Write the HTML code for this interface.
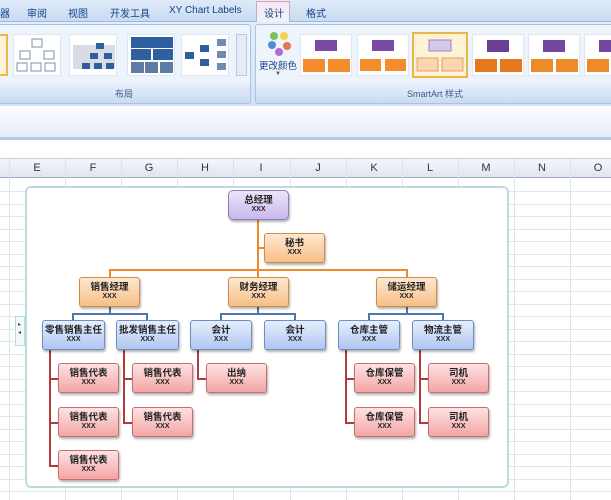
<!DOCTYPE html>
<html><head><meta charset="utf-8"><style>
*{margin:0;padding:0;box-sizing:border-box}
body{width:611px;height:500px;overflow:hidden;background:#fff;font-family:"Liberation Sans","Noto Sans CJK SC",sans-serif;position:relative}
.a{position:absolute}
.tabs{left:0;top:0;width:611px;height:22px;background:linear-gradient(#dfeaf7,#c9dbf1);border-bottom:1px solid #9fb7d8}
.tab{position:absolute;top:5px;font-size:10px;color:#15428b}
.rib{left:0;top:22px;width:611px;height:84px;background:linear-gradient(#e4eefa,#d3e2f5)}
.grp{position:absolute;top:2px;height:80px;border:1px solid #aac3e3;border-radius:3px;background:linear-gradient(#eef4fc 70%,#c8dbf2)}
.gl{position:absolute;bottom:3px;width:100%;text-align:center;font-size:9px;color:#3b5a8a}
.th{position:absolute;top:9px;height:42px;background:#fff;border:1px solid #dde6f2}
.bar{left:0;top:106px;width:611px;height:34px;background:linear-gradient(#fbfdff,#e6eef8);border-bottom:3px solid #b7c9e2}
.hdr{left:0;top:158px;width:611px;height:20px;background:linear-gradient(#f5f7fa,#dfe5ee);border-bottom:1px solid #9eb1c9;border-top:1px solid #c5cfdc}
.hdr span{position:absolute;top:3px;font-size:11px;color:#333;width:56px;text-align:center}
.vl{position:absolute;top:158px;width:1px;height:342px;background:#dde3ea}
.hl{position:absolute;left:0;width:611px;height:1px;background:#e0e5ec}
.b{position:absolute;width:61px;height:30px;border-radius:3px;font-size:9.5px;font-weight:bold;text-align:center;line-height:11px;padding-top:4px;color:#222;box-shadow:1px 2px 2px rgba(0,0,0,.3);white-space:nowrap}
.b i{display:block;font-style:normal;font-size:7px;line-height:8px}
.p{background:linear-gradient(#ece4fa,#c9b8ec);border:1px solid #8f7bbf;border-radius:5px}
.o{background:linear-gradient(#fde8d0,#f7bf88);border:1px solid #d08d4a}
.u{background:linear-gradient(#e6eefc,#afc7f2);border:1px solid #6f8fc4}
.r{background:linear-gradient(#fde2e2,#f3a5a5);border:1px solid #c46e6e}
.ol{position:absolute;background:#f08a2a}
.bl{position:absolute;background:#4d79b0}
.rl{position:absolute;background:#b23a3a}
</style></head><body>
<div class="a tabs">
<span class="tab" style="left:0">器</span><span class="tab" style="left:27px">审阅</span><span class="tab" style="left:68px">视图</span><span class="tab" style="left:110px">开发工具</span><span class="tab" style="left:169px">XY Chart Labels</span>
<div style="position:absolute;left:256px;top:1px;width:34px;height:22px;background:linear-gradient(#f7e7f1,#eef4fc);border:1px solid #c9a9c4;border-bottom:none"></div>
<span class="tab" style="left:264px">设计</span><span class="tab" style="left:306px">格式</span>
</div>
<div class="a rib">
<div class="grp" style="left:-3px;width:254px">
<div class="th" style="left:0;width:10px;border:2px solid #f0b545;background:#fff4d8"></div>
<div class="th" style="left:15px;width:48px"><svg width="48" height="40"><g fill="none" stroke="#7d8fa8"><rect x="18" y="4" width="10" height="8"/><rect x="6" y="16" width="10" height="8"/><rect x="30" y="16" width="10" height="8"/><rect x="3" y="28" width="10" height="8"/><rect x="17" y="28" width="10" height="8"/><rect x="31" y="28" width="10" height="8"/></g></svg></div>
<div class="th" style="left:71px;width:48px"><svg width="48" height="40"><rect x="3" y="10" width="42" height="24" fill="#d8dde5"/><rect x="26" y="8" width="8" height="6" fill="#2e5f9e"/><rect x="20" y="18" width="8" height="6" fill="#2e5f9e"/><rect x="34" y="18" width="8" height="6" fill="#2e5f9e"/><rect x="12" y="28" width="8" height="6" fill="#2e5f9e"/><rect x="24" y="28" width="8" height="6" fill="#2e5f9e"/><rect x="36" y="28" width="8" height="6" fill="#2e5f9e"/></svg></div>
<div class="th" style="left:129px;width:48px"><svg width="48" height="40"><rect x="3" y="2" width="42" height="11" fill="#2e5f9e"/><rect x="3" y="14" width="20" height="11" fill="#2e5f9e"/><rect x="25" y="14" width="20" height="11" fill="#2e5f9e"/><rect x="3" y="27" width="13" height="11" fill="#5d7ca6"/><rect x="17" y="27" width="13" height="11" fill="#5d7ca6"/><rect x="32" y="27" width="13" height="11" fill="#5d7ca6"/></svg></div>
<div class="th" style="left:183px;width:48px"><svg width="48" height="40"><rect x="3" y="17" width="9" height="7" fill="#2e5f9e"/><rect x="18" y="10" width="9" height="7" fill="#2e5f9e"/><rect x="18" y="24" width="9" height="7" fill="#2e5f9e"/><rect x="35" y="4" width="9" height="7" fill="#6e8bb3"/><rect x="35" y="16" width="9" height="7" fill="#6e8bb3"/><rect x="35" y="28" width="9" height="7" fill="#6e8bb3"/></svg></div>
<div style="position:absolute;left:238px;top:9px;width:11px;height:42px;background:#e3ecf8;border:1px solid #b7c9e2"></div>
<div class="gl">布局</div></div>
<div class="grp" style="left:255px;width:360px">
<svg style="position:absolute;left:11px;top:5px" width="26" height="26"><circle cx="7" cy="6" r="4" fill="#7cc35d"/><circle cx="17" cy="6" r="4" fill="#f1d44c"/><circle cx="5" cy="15" r="4" fill="#4f8fd6"/><circle cx="20" cy="16" r="4" fill="#e07a4a"/><circle cx="12" cy="22" r="4" fill="#b36ad0"/></svg>
<div style="position:absolute;left:3px;top:33px;font-size:9.5px;color:#15428b">更改颜色</div>
<div style="position:absolute;left:19px;top:46px;font-size:6px;color:#555">▼</div>
<div class="th" style="left:44px;width:52px"><svg width="52" height="40"><rect x="14" y="5" width="22" height="11" fill="#7b4aa3"/><rect x="2" y="24" width="22" height="13" fill="#f28c2c"/><rect x="27" y="24" width="22" height="13" fill="#f28c2c"/></svg></div>
<div class="th" style="left:101px;width:52px"><svg width="52" height="40"><rect x="14" y="5" width="22" height="11" fill="#7b4aa3"/><rect x="2" y="24" width="21" height="12" fill="#f28c2c"/><rect x="27" y="24" width="21" height="12" fill="#f28c2c"/></svg></div>
<div class="th" style="left:156px;width:56px;top:7px;height:46px;border:2px solid #e8b64b;background:#fff3d6"><svg width="52" height="40"><rect x="15" y="6" width="22" height="11" fill="#d6c9ee" stroke="#9b86c4"/><rect x="3" y="24" width="21" height="13" fill="#fbd5b0" stroke="#e0a06a"/><rect x="28" y="24" width="21" height="13" fill="#fbd5b0" stroke="#e0a06a"/></svg></div>
<div class="th" style="left:216px;width:52px"><svg width="52" height="40"><rect x="14" y="5" width="22" height="12" fill="#6a3e94"/><rect x="2" y="24" width="22" height="13" fill="#e5781c"/><rect x="27" y="24" width="22" height="13" fill="#e5781c"/></svg></div>
<div class="th" style="left:272px;width:52px"><svg width="52" height="40"><rect x="14" y="5" width="22" height="12" fill="#7447a0"/><rect x="2" y="24" width="22" height="13" fill="#ed8a2a"/><rect x="27" y="24" width="22" height="13" fill="#ed8a2a"/></svg></div>
<div class="th" style="left:328px;width:40px"><svg width="40" height="40"><rect x="14" y="5" width="22" height="12" fill="#7447a0"/><rect x="2" y="24" width="22" height="13" fill="#ed8a2a"/></svg></div>
<div class="gl">SmartArt 样式</div></div>
</div>
<div class="a bar"></div>
<div class="a hdr">
<span style="left:9px">E</span><span style="left:65px">F</span><span style="left:121px">G</span><span style="left:177px">H</span><span style="left:233px">I</span><span style="left:290px">J</span><span style="left:346px">K</span><span style="left:402px">L</span><span style="left:458px">M</span><span style="left:514px">N</span><span style="left:570px">O</span>
</div>
<div class="vl" style="left:9px"></div><div class="vl" style="left:65px"></div><div class="vl" style="left:121px"></div><div class="vl" style="left:177px"></div><div class="vl" style="left:233px"></div><div class="vl" style="left:290px"></div><div class="vl" style="left:346px"></div><div class="vl" style="left:402px"></div><div class="vl" style="left:458px"></div><div class="vl" style="left:514px"></div><div class="vl" style="left:570px"></div>
<div class="hl" style="top:191px"></div><div class="hl" style="top:204px"></div><div class="hl" style="top:216px"></div><div class="hl" style="top:229px"></div><div class="hl" style="top:241px"></div><div class="hl" style="top:254px"></div><div class="hl" style="top:266px"></div><div class="hl" style="top:279px"></div><div class="hl" style="top:291px"></div><div class="hl" style="top:304px"></div><div class="hl" style="top:316px"></div><div class="hl" style="top:329px"></div><div class="hl" style="top:341px"></div><div class="hl" style="top:354px"></div><div class="hl" style="top:366px"></div><div class="hl" style="top:379px"></div><div class="hl" style="top:391px"></div><div class="hl" style="top:404px"></div><div class="hl" style="top:416px"></div><div class="hl" style="top:429px"></div><div class="hl" style="top:441px"></div><div class="hl" style="top:454px"></div><div class="hl" style="top:466px"></div><div class="hl" style="top:479px"></div><div class="hl" style="top:491px"></div>
<div class="a" style="left:25px;top:186px;width:484px;height:302px;background:#fff;border:2px solid #b9dcdc;border-radius:6px"></div>
<div class="a" style="left:15px;top:316px;width:10px;height:30px;background:#f3f8fa;border:1px solid #b9dcdc;font-size:6px;color:#446;padding:4px 0 0 2px;line-height:8px">▸<br>◂</div>
<div class="ol" style="left:257px;top:220px;width:2px;height:58px"></div>
<div class="ol" style="left:258px;top:247px;width:7px;height:2px"></div>
<div class="ol" style="left:109px;top:269px;width:298px;height:2px"></div>
<div class="ol" style="left:109px;top:269px;width:2px;height:9px"></div>
<div class="ol" style="left:406px;top:269px;width:2px;height:9px"></div>
<div class="bl" style="left:109px;top:307px;width:2px;height:7px"></div><div class="bl" style="left:72px;top:313px;width:76px;height:2px"></div><div class="bl" style="left:72px;top:313px;width:2px;height:7px"></div><div class="bl" style="left:146px;top:313px;width:2px;height:7px"></div>
<div class="bl" style="left:257px;top:307px;width:2px;height:7px"></div><div class="bl" style="left:220px;top:313px;width:76px;height:2px"></div><div class="bl" style="left:220px;top:313px;width:2px;height:7px"></div><div class="bl" style="left:294px;top:313px;width:2px;height:7px"></div>
<div class="bl" style="left:406px;top:307px;width:2px;height:7px"></div><div class="bl" style="left:368px;top:313px;width:76px;height:2px"></div><div class="bl" style="left:368px;top:313px;width:2px;height:7px"></div><div class="bl" style="left:442px;top:313px;width:2px;height:7px"></div>
<div class="rl" style="left:49px;top:350px;width:2px;height:116px"></div><div class="rl" style="left:49px;top:378px;width:9px;height:2px"></div><div class="rl" style="left:49px;top:422px;width:9px;height:2px"></div><div class="rl" style="left:49px;top:465px;width:9px;height:2px"></div>
<div class="rl" style="left:123px;top:350px;width:2px;height:74px"></div><div class="rl" style="left:123px;top:378px;width:9px;height:2px"></div><div class="rl" style="left:123px;top:422px;width:9px;height:2px"></div>
<div class="rl" style="left:197px;top:350px;width:2px;height:30px"></div><div class="rl" style="left:197px;top:378px;width:9px;height:2px"></div>
<div class="rl" style="left:345px;top:350px;width:2px;height:74px"></div><div class="rl" style="left:345px;top:378px;width:9px;height:2px"></div><div class="rl" style="left:345px;top:422px;width:9px;height:2px"></div>
<div class="rl" style="left:419px;top:350px;width:2px;height:74px"></div><div class="rl" style="left:419px;top:378px;width:9px;height:2px"></div><div class="rl" style="left:419px;top:422px;width:9px;height:2px"></div>
<div class="b p" style="left:228px;top:190px">总经理<i>XXX</i></div>
<div class="b o" style="left:264px;top:233px">秘书<i>XXX</i></div>
<div class="b o" style="left:79px;top:277px">销售经理<i>XXX</i></div>
<div class="b o" style="left:228px;top:277px">财务经理<i>XXX</i></div>
<div class="b o" style="left:376px;top:277px">储运经理<i>XXX</i></div>
<div class="b u" style="left:42px;top:320px;width:63px">零售销售主任<i>XXX</i></div>
<div class="b u" style="left:116px;top:320px;width:63px">批发销售主任<i>XXX</i></div>
<div class="b u" style="left:190px;top:320px;width:62px">会计<i>XXX</i></div>
<div class="b u" style="left:264px;top:320px;width:62px">会计<i>XXX</i></div>
<div class="b u" style="left:338px;top:320px;width:62px">仓库主管<i>XXX</i></div>
<div class="b u" style="left:412px;top:320px;width:62px">物流主管<i>XXX</i></div>
<div class="b r" style="left:58px;top:363px">销售代表<i>XXX</i></div>
<div class="b r" style="left:58px;top:407px">销售代表<i>XXX</i></div>
<div class="b r" style="left:58px;top:450px">销售代表<i>XXX</i></div>
<div class="b r" style="left:132px;top:363px">销售代表<i>XXX</i></div>
<div class="b r" style="left:132px;top:407px">销售代表<i>XXX</i></div>
<div class="b r" style="left:206px;top:363px">出纳<i>XXX</i></div>
<div class="b r" style="left:354px;top:363px">仓库保管<i>XXX</i></div>
<div class="b r" style="left:354px;top:407px">仓库保管<i>XXX</i></div>
<div class="b r" style="left:428px;top:363px">司机<i>XXX</i></div>
<div class="b r" style="left:428px;top:407px">司机<i>XXX</i></div>
</body></html>
